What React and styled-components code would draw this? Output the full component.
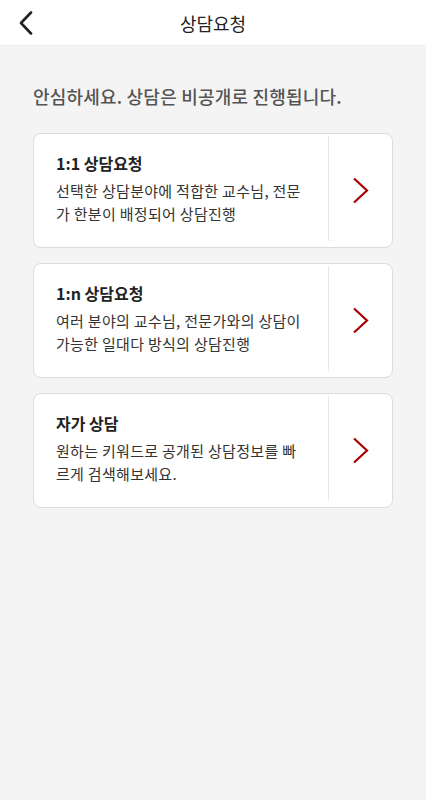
import React from 'react'
import styled, { createGlobalStyle } from 'styled-components'

const GlobalStyle = createGlobalStyle`
  html, body {
    margin: 0;
    padding: 0;
    background: #f4f4f4;
    font-family: "Noto Sans CJK KR", "Noto Sans", sans-serif;
  }
  * { box-sizing: border-box; }
`

const Page = styled.div`
  min-height: 800px;
  background: #f4f4f4;
`

const Header = styled.header`
  position: relative;
  height: 46px;
  background: #fff;
  border-bottom: 1px solid #ececec;
  display: flex;
  align-items: center;
  justify-content: center;
`

const BackButton = styled.button`
  position: absolute;
  left: 12px;
  top: 8px;
  width: 28px;
  height: 30px;
  border: none;
  background: none;
  padding: 0;
  display: flex;
  align-items: center;
  justify-content: center;
  cursor: pointer;
`

const Title = styled.h1`
  margin: 0;
  font-size: 18px;
  font-weight: 400;
  color: #222;
`

const Content = styled.main`
  padding: 37px 33px 0;
`

const Notice = styled.p`
  margin: 0 0 24px;
  font-size: 18px;
  line-height: 26px;
  font-weight: 500;
  color: #555;
  letter-spacing: 0.2px;
`

const CardList = styled.div`
  display: flex;
  flex-direction: column;
  gap: 15px;
`

const Card = styled.div`
  display: flex;
  height: 115px;
  background: #fff;
  border: 1px solid #dcdcdc;
  border-radius: 8px;
`

const CardBody = styled.div`
  flex: 1;
  padding: 15px 18px 0 22px;
  border-right: 1px solid #e8e8e8;
  margin: 2px 0 6px;
`

const CardTitle = styled.h2`
  margin: 0 0 4px;
  font-size: 16px;
  font-weight: 700;
  color: #222;
  line-height: 24px;
`

const CardDesc = styled.p`
  margin: 0;
  font-size: 15px;
  line-height: 23px;
  color: #333;
  letter-spacing: 0.3px;
`

const Arrow = styled.div`
  width: 63px;
  display: flex;
  align-items: center;
  justify-content: center;
`

const items = [
  { title: '1:1 상담요청', desc: '선택한 상담분야에 적합한 교수님, 전문가 한분이 배정되어 상담진행' },
  { title: '1:n 상담요청', desc: '여러 분야의 교수님, 전문가와의 상담이 가능한 일대다 방식의 상담진행' },
  { title: '자가 상담', desc: '원하는 키워드로 공개된 상담정보를 빠르게 검색해보세요.' },
]

export default function App() {
  return (
    <Page>
      <GlobalStyle />
      <Header>
        <BackButton aria-label="뒤로">
          <svg width="16" height="24" viewBox="0 0 16 24">
            <path d="M13 1.5 L3 12 L13 22.5" fill="none" stroke="#222" strokeWidth="2.6" strokeLinecap="round" strokeLinejoin="round" />
          </svg>
        </BackButton>
        <Title>상담요청</Title>
      </Header>
      <Content>
        <Notice>안심하세요. 상담은 비공개로 진행됩니다.</Notice>
        <CardList>
          {items.map((it) => (
            <Card key={it.title}>
              <CardBody>
                <CardTitle>{it.title}</CardTitle>
                <CardDesc>{it.desc}</CardDesc>
              </CardBody>
              <Arrow>
                <svg width="17" height="27" viewBox="0 0 17 27">
                  <path d="M2 1.5 L15 13.5 L2 25.5" fill="none" stroke="#a80000" strokeWidth="2.2" />
                </svg>
              </Arrow>
            </Card>
          ))}
        </CardList>
      </Content>
    </Page>
  )
}
